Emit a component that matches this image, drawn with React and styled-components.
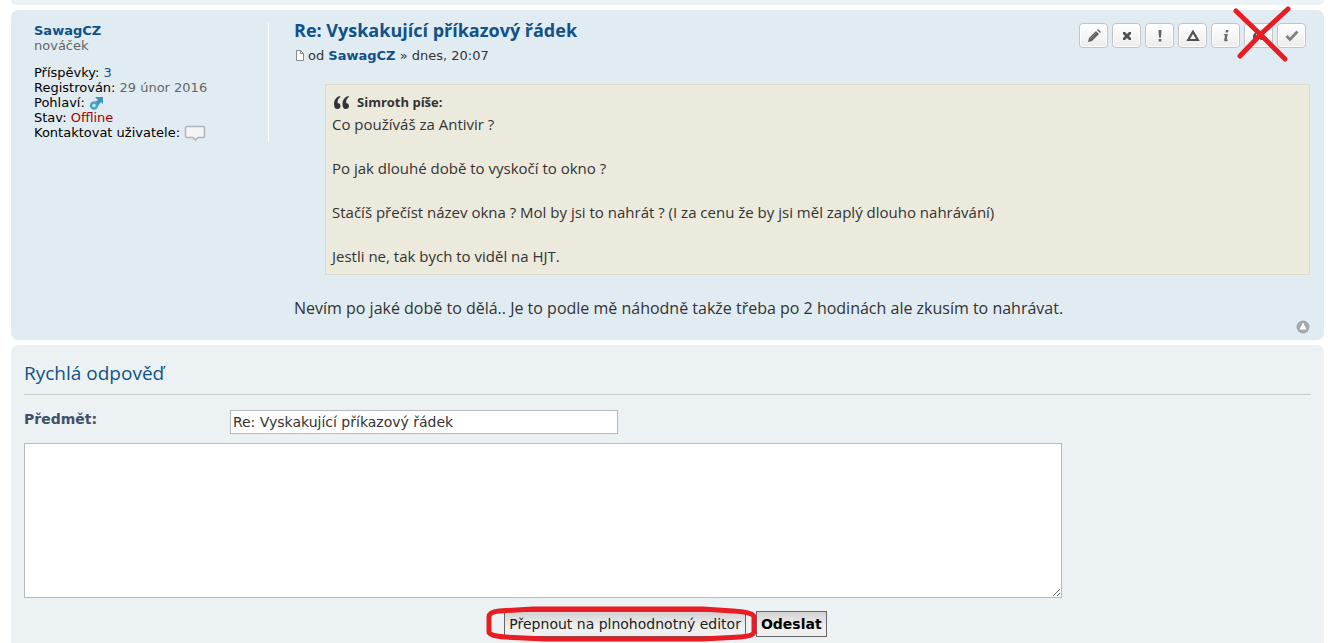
import React, { useState } from 'react'
import styled, { createGlobalStyle } from 'styled-components';

const GlobalStyle = createGlobalStyle`
  * {
    box-sizing: border-box;
  }
  body {
    margin: 0;
    background: #fff;
    color: #333;
    font-family: Verdana, "DejaVu Sans", sans-serif;
    font-size: 13px;
    line-height: 15px;
  }
  a {
    color: #105289;
    text-decoration: none;
  }
`;

const Page = styled.div`
  display: flex;
  flex-direction: column;
  min-height: 100vh;
  padding: 0 4px 0 11px;
`;

const PreviousPost = styled.div`
  height: 5px;
  margin-bottom: 5px;
  border-radius: 0 0 7px 7px;
  background: #ecf3f7;
`;

const Post = styled.article`
  display: flex;
  margin-bottom: 5px;
  padding: 13px 14px 6px 23px;
  border-radius: 7px;
  background: #e1ebf2;
`;

const Profile = styled.aside`
  flex: none;
  align-self: flex-start;
  width: 235px;
  height: 119px;
  border-right: 1px solid #fff;
  color: #000;
`;

const Rank = styled.div`
  margin-bottom: 12px;
  color: #666;
`;

const Detail = styled.div`
  display: flex;
  align-items: center;
  gap: 4px;
  height: 15px;

  a {
    display: flex;
  }
`;

const Value = styled.span`
  color: ${(p) => (p.$offline ? '#aa0000' : '#666')};
`;

const Body = styled.div`
  flex: 1;
  min-width: 0;
  padding-left: 25px;
`;

const Top = styled.header`
  display: flex;
  justify-content: space-between;
`;

const Title = styled.h3`
  margin: 0 0 9px;
  font: bold 18px/15px "Trebuchet MS", "Open Sans", sans-serif;
`;

const Author = styled.p`
  display: flex;
  align-items: center;
  gap: 3px;
  height: 17px;
  margin: 0 0 20px;
`;

const Tools = styled.ul`
  position: relative;
  display: flex;
  gap: 4px;
  height: 25px;
  margin: 0 4px 0 0;
  padding: 0;
  list-style: none;
`;

const Tool = styled.button`
  display: flex;
  align-items: center;
  justify-content: center;
  width: 29px;
  height: 25px;
  padding: 0;
  border: 1px solid #c0c5c9;
  border-radius: 4px;
  background: linear-gradient(#fff, #ececec);
  box-shadow: 0 0 0 1px #fff inset;
  cursor: pointer;
`;

const Cross = styled.svg`
  position: absolute;
  top: -17px;
  right: 13px;
  pointer-events: none;
`;

const Quote = styled.blockquote`
  margin: 0 0 22px 31px;
  padding: 6px 6px 7px;
  border: 1px solid #dbdbce;
  background: #ebeadd;
  font: 15px/22px "Trebuchet MS", "Open Sans", sans-serif;

  p {
    margin: 0 0 22px;
  }
  p:last-child {
    margin: 0;
  }
`;

const Cite = styled.cite`
  display: flex;
  align-items: center;
  gap: 7px;
  padding-left: 1px;
  font-size: 13px;
  font-style: normal;
  font-weight: bold;
`;

const Message = styled.p`
  margin: 0 0 1px;
  font: 16px/22px "Trebuchet MS", "Open Sans", sans-serif;
`;

const BackTop = styled.a`
  display: flex;
  justify-content: flex-end;
`;

const Reply = styled.form`
  flex: 1;
  padding: 17px 13px 6px;
  border-radius: 7px 7px 0 0;
  background: #ecf1f3;
`;

const ReplyTitle = styled.h2`
  margin: 0 0 15px;
  padding-bottom: 10px;
  border-bottom: 1px solid #ccc;
  color: #105289;
  font: 19px/22px "Trebuchet MS", "Open Sans", sans-serif;
`;

const Field = styled.div`
  display: flex;
  margin-bottom: 9px;

  label {
    width: 16%;
    padding-top: 2px;
    color: #425067;
    font-size: 14px;
    font-weight: bold;
  }
  input {
    width: 388px;
    height: 24px;
    padding: 2px;
    border: 1px solid #b4bac0;
    color: #333;
    font: 14px "DejaVu Sans", sans-serif;
  }
`;

const Editor = styled.textarea`
  display: block;
  box-sizing: content-box;
  width: 80%;
  height: 147px;
  margin-bottom: 13px;
  padding: 3px;
  border: 1px solid #b4bac0;
  background: #fff;
  font: 14px "DejaVu Sans", sans-serif;
`;

const Actions = styled.div`
  display: flex;
  justify-content: center;
  gap: 10px;
  padding-right: 4px;
`;

const Circled = styled.div`
  position: relative;
  display: flex;
`;

const Ring = styled.svg`
  position: absolute;
  top: -6px;
  left: -19px;
  pointer-events: none;
`;

const Submit = styled.button`
  height: 26px;
  padding: 0 4px;
  border: 1px solid #666;
  background: linear-gradient(#d2d2d2, #efefef 60%);
  color: ${(p) => (p.$main ? '#000' : '#222')};
  font: ${(p) => (p.$main ? 'bold' : 'normal')} 14px "DejaVu Sans", sans-serif;
  cursor: pointer;
`;

const icons = {
  Upravit: (
    <>
      <path d="M2 14l1-4 7-7 3 3-7 7z" fill="#606060" />
      <path d="M11 2l1-1 3 3-1 1z" fill="#606060" />
      <path d="M4 11l6-6" stroke="#888" />
    </>
  ),
  Smazat: <path d="M4 4h2l2 2 2-2h2v2l-2 2 2 2v2h-2l-2-2-2 2H4v-2l2-2-2-2z" fill="#505050" />,
  Nahlásit: <path d="M6.5 2h3L9 9.5H7zM6.7 11h2.6v2.6H6.7z" fill="#606060" />,
  Varovat: <path d="M8 3.8L12.8 12H3.2z" fill="none" stroke="#505050" strokeWidth="2.2" />,
  Informace: (
    <path d="M8 2h2.5L10 4.4H7.5zM6 6h3.8L8.6 11.7l1.4-.3-.2 1.1c-1.5 1.3-4 1.2-3.6-.7L7.1 7.2H5.8z" fill="#686868" />
  ),
  Citovat: (
    <path d="M7 4C4 4 2 6 2 9c0 2 1 3 2.5 3S7 11 7 9.7 6 7.5 4.8 7.5C5 6 6 5 7 5zM13 4c-3 0-5 2-5 5 0 2 1 3 2.5 3S13 11 13 9.7 12 7.5 10.8 7.5C11 6 12 5 13 5z" fill="#505050" />
  ),
  Vyřešeno: <path d="M2.5 8l3.5 3.5 7.5-8" fill="none" stroke="#808080" strokeWidth="2.8" />,
};

const MaleIcon = () => (
  <svg width="14" height="14" viewBox="0 0 14 14" aria-label="Muž">
    <path d="M6 1h8v7l-2-2-3 4-3-4 3-2z" fill="#3d94b8" />
    <circle cx="5" cy="9.5" r="3" fill="#c5e8f4" stroke="#4aa4c8" strokeWidth="2.4" />
  </svg>
);

const BubbleIcon = () => (
  <svg width="22" height="16" viewBox="0 0 22 16">
    <path
      d="M3 1.5h16q1.5 0 1.5 1.5v8q0 1.5-1.5 1.5h-5L11.5 15 9 12.5H3Q1.5 12.5 1.5 11V3Q1.5 1.5 3 1.5z"
      fill="#f2f4f5"
      stroke="#b0b5b8"
      strokeWidth="1.5"
    />
  </svg>
);

const PageIcon = () => (
  <svg width="11" height="13" viewBox="0 0 11 13">
    <path d="M2.500 1.500h4l3 3v7h-7z" fill="#fff" stroke="#888" />
    <path d="M6.500 1.500v3h3" fill="none" stroke="#888" />
  </svg>
);

const QuoteIcon = () => (
  <svg width="17" height="13" viewBox="0 0 17 13">
    <path
      d="M7 0C3 1 1 4 1 8c0 3 1 5 3.3 5C6.200 13 7.500 11.800 7.500 10S6 7 4.500 7C4.500 4 5.500 2 7.500 1zM15.500 0c-4 1-6 4-6 8 0 3 1 5 3.300 5 1.900 0 3.200-1.200 3.200-3s-1.500-3-3-3c0-3 1-5 3-6z"
      fill="#333"
    />
  </svg>
);

const App = () => {
  const [subject, setSubject] = useState('Re: Vyskakující příkazový řádek');
  const [text, setText] = useState('');

  return (
    <>
      <GlobalStyle />
      <Page>
        <PreviousPost />
        <Post>
          <Profile>
            <a href="#user"><b>SawagCZ</b></a>
            <Rank>nováček</Rank>
            <Detail>Příspěvky: <a href="#posts">3</a></Detail>
            <Detail>Registrován: <Value>29 únor 2016</Value></Detail>
            <Detail>Pohlaví: <MaleIcon /></Detail>
            <Detail>Stav: <Value $offline>Offline</Value></Detail>
            <Detail>Kontaktovat uživatele: <a href="#contact" aria-label="Kontaktovat"><BubbleIcon /></a></Detail>
          </Profile>
          <Body>
            <Top>
              <div>
                <Title><a href="#post">Re: Vyskakující příkazový řádek</a></Title>
                <Author>
                  <PageIcon />
                  <span>od <a href="#user"><b>SawagCZ</b></a> » dnes, 20:07</span>
                </Author>
              </div>
              <Tools>
                {Object.keys(icons).map((name) => (
                  <li key={name}>
                    <Tool type="button" aria-label={name}>
                      <svg width="16" height="16" viewBox="0 0 16 16">{icons[name]}</svg>
                    </Tool>
                  </li>
                ))}
                <Cross width="62" height="58" viewBox="0 0 62 58" fill="none" stroke="#e81c24" strokeWidth="5" strokeLinecap="round">
                  <path d="M5 5l24 23 25 25" />
                  <path d="M57 3L30 28 9 50" />
                </Cross>
              </Tools>
            </Top>
            <Quote>
              <Cite><QuoteIcon />Simroth píše:</Cite>
              <p>Co používáš za Antivir ?</p>
              <p>Po jak dlouhé době to vyskočí to okno ?</p>
              <p>Stačíš přečíst název okna ? Mol by jsi to nahrát ? (I za cenu že by jsi měl zaplý dlouho nahrávání)</p>
              <p>Jestli ne, tak bych to viděl na HJT.</p>
            </Quote>
            <Message>
              Nevím po jaké době to dělá.. Je to podle mě náhodně takže třeba po 2 hodinách ale zkusím to nahrávat.
            </Message>
            <BackTop href="#top" aria-label="Nahoru">
              <svg width="14" height="14" viewBox="0 0 14 14">
                <circle cx="7" cy="7" r="6.5" fill="#a5a8aa" />
                <path d="M7 2.5L10.5 9.5h-7z" fill="#fff" />
              </svg>
            </BackTop>
          </Body>
        </Post>
        <Reply onSubmit={(e) => e.preventDefault()}>
          <ReplyTitle>Rychlá odpověď</ReplyTitle>
          <Field>
            <label htmlFor="subject">Předmět:</label>
            <input id="subject" type="text" value={subject} onChange={(e) => setSubject(e.target.value)} />
          </Field>
          <Editor aria-label="Zpráva" value={text} onChange={(e) => setText(e.target.value)} />
          <Actions>
            <Circled>
              <Submit type="button">Přepnout na plnohodnotný editor</Submit>
              <Ring width="276" height="38" viewBox="0 0 276 38" fill="none" stroke="#e81c24" strokeWidth="5" strokeLinejoin="round">
                <path d="M4 12q0-5 10-6l34-2h170l30 2q21 1 21 6v15q0 4-14 5l-37 2H60l-40-2Q4 31 4 27z" />
              </Ring>
            </Circled>
            <Submit type="submit" $main>Odeslat</Submit>
          </Actions>
        </Reply>
      </Page>
    </>
  );
}

export default App
